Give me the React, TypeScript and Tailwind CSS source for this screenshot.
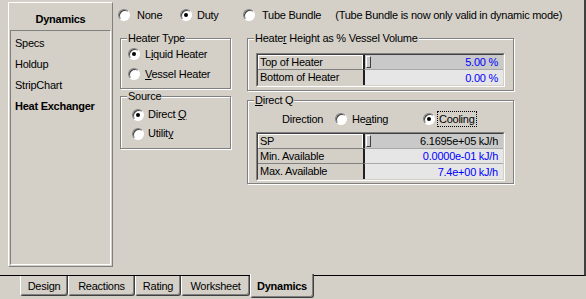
import React from 'react';

type Row = { label: string; value: string; blue?: boolean; selected?: boolean };

const Radio: React.FC<{ checked?: boolean }> = ({ checked }) => (
  <span className="inline-flex w-[12px] h-[12px] shrink-0 items-center justify-center rounded-full bg-white border border-t-[#808080] border-l-[#808080] border-r-white border-b-white shadow-[inset_1px_1px_0_#404040]">
    {checked && <span className="w-[4px] h-[4px] rounded-full bg-black" />}
  </span>
);

const GroupBox: React.FC<{ title: React.ReactNode; className?: string; children: React.ReactNode }> = ({ title, className, children }) => (
  <div className={`relative border border-[#808080] shadow-[inset_1px_1px_0_#fff,1px_1px_0_#fff] ${className ?? ''}`}>
    <span className="absolute left-[6px] -top-[7px] px-[1px] bg-[#d4d0c8] leading-[13px] whitespace-nowrap">{title}</span>
    {children}
  </div>
);

const Grid: React.FC<{ rows: Row[] }> = ({ rows }) => (
  <div className="w-[249px] border border-t-[#808080] border-l-[#808080] border-r-white border-b-white">
    <div className="border border-t-[#404040] border-l-[#404040] border-r-[#d4d0c8] border-b-[#d4d0c8]">
      {rows.map((r, i) => {
        const last = i === rows.length - 1;
        return (
          <div key={r.label} className="flex h-[15px]">
            <div
              className={`w-[105px] pl-[2px] leading-[14px] bg-[#d4d0c8] ${last ? '' : 'border-b border-b-[#808080]'} ${
                r.selected ? 'shadow-[inset_1px_1px_0_#fff,inset_-1px_0_0_#fff]' : ''
              }`}
            >
              {r.label}
            </div>
            <div
              className={`flex flex-1 items-center border-l-2 border-l-[#202020] ${last ? '' : 'border-b border-b-[#a8a8a8]'} ${
                r.selected ? 'bg-[#c9c9c9]' : 'bg-[#e6e6e6]'
              }`}
            >
              {r.selected && (
                <span className="ml-[1px] w-[5px] h-[12px] border border-t-white border-l-white border-r-[#404040] border-b-[#404040]" />
              )}
              <span className={`flex-1 text-right pr-[5px] leading-[14px] ${r.blue ? 'text-[#0000ff]' : 'text-black'}`}>{r.value}</span>
            </div>
          </div>
        );
      })}
    </div>
  </div>
);

const tabs = [
  { name: 'Design', w: 'w-[48px]' },
  { name: 'Reactions', w: 'w-[67px]' },
  { name: 'Rating', w: 'w-[46px]' },
  { name: 'Worksheet', w: 'w-[69px]' },
];

const App: React.FC = () => {
  return (
    <div className="w-[586px] h-[299px] overflow-hidden bg-[#d4d0c8] text-black text-[11px] leading-[13px] tracking-[-0.25px] font-['Liberation_Sans',Arial,sans-serif]">
      {/* Property page */}
      <div className="flex h-[276px] border-b border-b-black border-r-2 border-r-[#404040]">
        {/* Sidebar */}
        <div className="ml-[8px] mt-[2px] w-[105px] h-[265px] flex flex-col border border-t-white border-l-white border-r-[#808080] border-b-[#808080]">
          <div className="h-[27px] pt-[5px] flex items-center justify-center font-bold">Dynamics</div>
          <div className="flex-1 mx-[1px] mb-[1px] pt-[2px] pl-[4px] border border-t-[#808080] border-l-[#808080] border-r-white border-b-white">
            <div className="h-[21px] flex items-center">Specs</div>
            <div className="h-[21px] flex items-center">Holdup</div>
            <div className="h-[21px] flex items-center">StripChart</div>
            <div className="h-[21px] flex items-center font-bold">Heat Exchanger</div>
          </div>
        </div>

        {/* Main */}
        <div className="flex flex-col">
          <div className="flex items-center h-[14px] mt-[8px] ml-[5px]">
            <div className="flex items-center gap-[7px] w-[62px]">
              <Radio />
              <span>None</span>
            </div>
            <div className="flex items-center gap-[5px] w-[63px]">
              <Radio checked />
              <span>Duty</span>
            </div>
            <div className="flex items-center gap-[7px]">
              <Radio />
              <span>Tube Bundle</span>
            </div>
            <span className="ml-[14px] whitespace-nowrap">(Tube Bundle is now only valid in dynamic mode)</span>
          </div>

          <div className="flex mt-[16px]">
            <div className="ml-[7px] flex flex-col">
              <GroupBox title="Heater Type" className="w-[111px] h-[51px] pt-[5px] pl-[7px]">
                <div className="h-[20px] flex items-center gap-[5px]">
                  <Radio checked />
                  <span>
                    L<u>i</u>quid Heater
                  </span>
                </div>
                <div className="h-[20px] flex items-center gap-[5px]">
                  <Radio />
                  <span>
                    <u>V</u>essel Heater
                  </span>
                </div>
              </GroupBox>
              <GroupBox title="Source" className="mt-[7px] w-[111px] h-[53px] pt-[8px] pl-[11px]">
                <div className="h-[19px] flex items-center gap-[4px]">
                  <Radio checked />
                  <span>
                    Direct <u>Q</u>
                  </span>
                </div>
                <div className="h-[19px] flex items-center gap-[4px]">
                  <Radio />
                  <span>
                    Utilit<u>y</u>
                  </span>
                </div>
              </GroupBox>
            </div>

            <div className="ml-[16px] flex flex-col">
              <GroupBox
                title={
                  <>
                    Heate<u>r</u> Height as % Vessel Volume
                  </>
                }
                className="w-[267px] h-[53px] pt-[14px] pl-[8px]"
              >
                <Grid
                  rows={[
                    { label: 'Top of Heater', value: '5.00 %', blue: true, selected: true },
                    { label: 'Bottom of Heater', value: '0.00 %', blue: true },
                  ]}
                />
              </GroupBox>

              <GroupBox
                title={
                  <>
                    <u>D</u>irect Q
                  </>
                }
                className="mt-[9px] w-[267px] h-[84px] pt-[10px] pl-[8px]"
              >
                <div className="flex items-center h-[16px] pl-[26px]">
                  <span className="w-[53px]">Direction</span>
                  <div className="flex items-center gap-[5px] w-[88px]">
                    <Radio />
                    <span>
                      He<u>a</u>ting
                    </span>
                  </div>
                  <div className="flex items-center gap-[2px]">
                    <Radio checked />
                    <span className="h-[16px] px-[1px] flex items-center border border-dotted border-black">
                      Coolin<u>g</u>
                    </span>
                  </div>
                </div>
                <div className="mt-[5px]">
                  <Grid
                    rows={[
                      { label: 'SP', value: '6.1695e+05 kJ/h', selected: true },
                      { label: 'Min. Available', value: '0.0000e-01 kJ/h', blue: true },
                      { label: 'Max. Available', value: '7.4e+00 kJ/h', blue: true },
                    ]}
                  />
                </div>
              </GroupBox>
            </div>
          </div>
        </div>
      </div>

      {/* Tabs */}
      <div className="flex pl-[20px] h-[23px]">
        {tabs.map((t) => (
          <div
            key={t.name}
            className={`${t.w} h-[20px] pt-[1px] flex items-center justify-center border-l border-l-white border-r border-r-[#404040] border-b border-b-[#404040] rounded-b-[3px] shadow-[inset_-1px_-1px_0_#808080]`}
          >
            {t.name}
          </div>
        ))}
        <div className="relative z-10 -mt-[2px] w-[64px] h-[24px] pt-[2px] flex items-center justify-center font-bold bg-[#d4d0c8] border-l border-l-white border-r border-r-[#404040] border-b border-b-[#404040] rounded-b-[3px] shadow-[inset_-1px_-1px_0_#808080]">
          Dynamics
        </div>
      </div>
    </div>
  );
};

export default App;
